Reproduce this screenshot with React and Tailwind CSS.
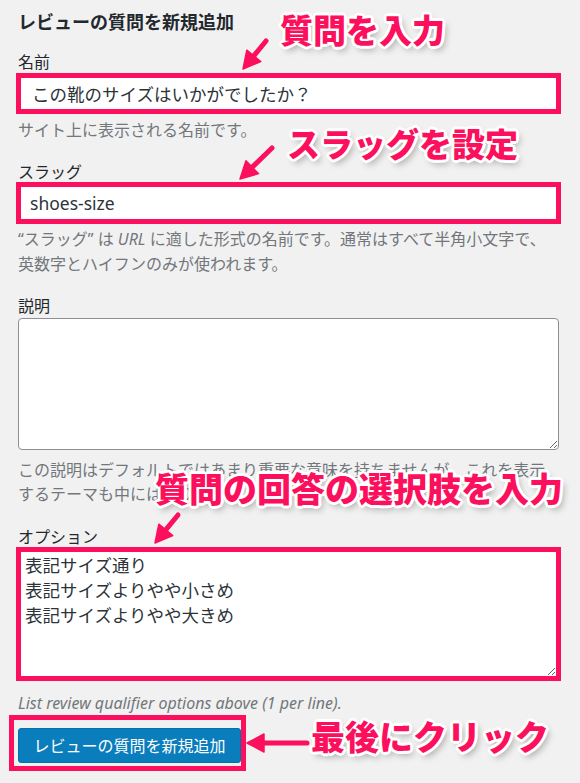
import React from 'react';

const PINK = '#fc0f5c';

const Arrow = ({ from, to }) => {
	// shaft + filled head, pointing from -> to
	const dx = to[0] - from[0];
	const dy = to[1] - from[1];
	const len = Math.hypot(dx, dy);
	const ux = dx / len;
	const uy = dy / len;
	const head = 17;
	const half = 9;
	const bx = to[0] - ux * head;
	const by = to[1] - uy * head;
	const p1 = `${bx - uy * half},${by + ux * half}`;
	const p2 = `${bx + uy * half},${by - ux * half}`;
	return (
		<g>
			<line x1={from[0]} y1={from[1]} x2={bx + ux * 2} y2={by + uy * 2} stroke={PINK} strokeWidth="5" strokeLinecap="round" />
			<polygon points={`${to[0]},${to[1]} ${p1} ${p2}`} fill={PINK} strokeLinejoin="round" stroke={PINK} strokeWidth="1.5" />
		</g>
	);
};

const Note = ({ children, className }) => (
	<div
		className={`absolute whitespace-nowrap font-black leading-none text-[#fc0f5c] font-['Noto_Sans_CJK_JP',sans-serif] [text-shadow:0_0_2px_#fff,2px_2px_0_#fff,-2px_-2px_0_#fff,2px_-2px_0_#fff,-2px_2px_0_#fff,0_3px_0_#fff,0_-3px_0_#fff,3px_0_0_#fff,-3px_0_0_#fff,3px_4px_7px_rgba(0,0,0,0.35)] ${className}`}
	>
		{children}
	</div>
);

const App = () => {
	return (
		<div className="relative h-[783px] w-[580px] overflow-hidden bg-[#f1f1f1] font-['Noto_Sans','Noto_Sans_CJK_JP',sans-serif] text-[#23282d]">
			<div className="flex w-[559px] flex-col pl-[18px] pt-[10px]">
				<h2 className="text-[18px] font-bold leading-[24px]">レビューの質問を新規追加</h2>

				{/* 名前 */}
				<label className="mt-[17px] text-[16px] leading-[22px]">名前</label>
				<div className="-mx-[2px] border-[5px] border-[#fc0f5c] bg-white">
					<input
						readOnly
						value="この靴のサイズはいかがでしたか？"
						className="h-[31px] w-full bg-white pl-[11px] text-[17.5px] text-[#2c3338] outline-none"
					/>
				</div>
				<p className="mt-[5px] text-[16px] leading-[22px] text-[#72777c]">サイト上に表示される名前です。</p>

				{/* スラッグ */}
				<label className="mt-[20px] text-[16px] leading-[22px]">スラッグ</label>
				<div className="-mx-[2px] -mt-[1px] border-[5px] border-[#fc0f5c] bg-white">
					<input
						readOnly
						value="shoes-size"
						className="h-[32px] w-full bg-white pl-[9px] text-[17.5px] text-[#2c3338] outline-none"
					/>
				</div>
				<p className="mt-[3px] text-[16px] leading-[25px] text-[#72777c]">
					“スラッグ” は <i>URL</i> に適した形式の名前です。通常はすべて半角小文字で、
					<br />
					英数字とハイフンのみが使われます。
				</p>

				{/* 説明 */}
				<label className="mt-[18px] text-[16px] leading-[22px]">説明</label>
				<textarea
					readOnly
					className="mt-[1px] h-[132px] w-full rounded-[4px] border border-[#8c8f94] bg-white outline-none"
				/>
				<p className="mt-[8px] text-[16px] leading-[24px] text-[#72777c]">
					この説明はデフォルトではあまり重要な意味を持ちませんが、これを表示
					<br />
					するテーマも中にはあります。
				</p>

				{/* オプション */}
				<label className="mt-[20px] text-[16px] leading-[22px]">オプション</label>
				<div className="-mx-[2px] -mt-[1px] border-[5px] border-[#fc0f5c] bg-white">
					<textarea
						readOnly
						value={'表記サイズ通り\n表記サイズよりやや小さめ\n表記サイズよりやや大きめ'}
						className="block h-[124px] w-full bg-white pl-[4px] pt-[1px] text-[17.5px] leading-[25px] text-[#2c3338] outline-none"
					/>
				</div>
				<p className="mt-[11px] text-[16px] italic leading-[22px] text-[#72777c]">
					List review qualifier options above (1 per line).
				</p>

				{/* 送信 */}
				<div className="-ml-[9px] mt-[1px] self-start border-[5px] border-[#fc0f5c] pb-[3px] pl-[4px] pt-[8px]">
					<button className="h-[35px] w-[223px] rounded-[3px] border border-[#0073aa] bg-[#0a7dbd] text-[16px] text-white">
						レビューの質問を新規追加
					</button>
				</div>
			</div>

			{/* 注釈 */}
			<Note className="left-[280px] top-[13px] text-[33px]">質問を入力</Note>
			<Note className="left-[287px] top-[127px] text-[33px]">スラッグを設定</Note>
			<Note className="left-[155px] top-[471px] text-[34px]">質問の回答の選択肢を入力</Note>
			<Note className="left-[311px] top-[719px] text-[34px]">最後にクリック</Note>

			<svg className="pointer-events-none absolute left-0 top-0" width="580" height="783">
				<Arrow from={[266, 41]} to={[243, 69]} />
				<Arrow from={[272, 148]} to={[240, 179]} />
				<Arrow from={[178, 515]} to={[155, 543]} />
				<Arrow from={[307, 743]} to={[247, 743]} />
			</svg>
		</div>
	);
};

export default App;
